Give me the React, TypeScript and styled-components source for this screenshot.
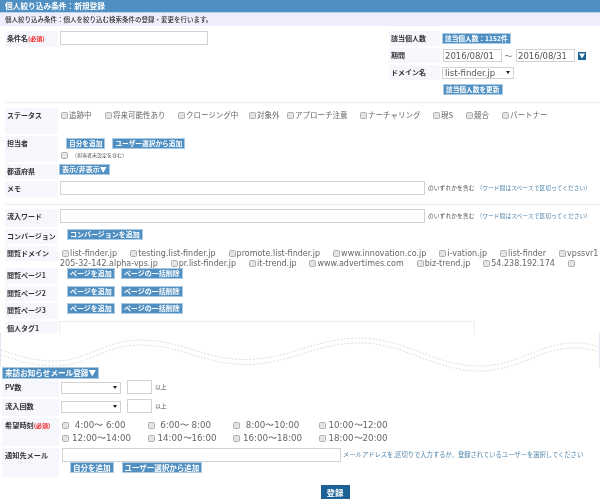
import styled, { createGlobalStyle } from "styled-components";

const GlobalStyle = createGlobalStyle`
    html, body {
        margin: 0;
        padding: 0;
        background: #fff;
    }
    body {
        font-family: "Noto Sans CJK JP", "Liberation Sans", sans-serif;
        font-size: 9px;
        color: #444;
    }
`;

const statuses = ["追跡中", "将来可能性あり", "クロージング中", "対象外", "アプローチ注意", "ナーチャリング", "現S", "競合", "パートナー"];
const domains1 = ["list-finder.jp", "testing.list-finder.jp", "promote.list-finder.jp", "www.innovation.co.jp", "i-vation.jp", "list-finder", "vpssvr1"];
const domains2 = ["pr.list-finder.jp", "it-trend.jp", "www.advertimes.com", "biz-trend.jp", "54.238.192.174"];
const hours = [" 4:00〜 6:00", " 6:00〜 8:00", " 8:00〜10:00", "10:00〜12:00", "12:00〜14:00", "14:00〜16:00", "16:00〜18:00", "18:00〜20:00"];
const pages = ["閲覧ページ1", "閲覧ページ2", "閲覧ページ3"];

const App = () => {
    return (
        <Page>
            <GlobalStyle />
            <Title>個人絞り込み条件：新規登録</Title>
            <SubTitle>個人絞り込み条件：個人を絞り込む検索条件の登録・変更を行います。</SubTitle>

            <TopSection>
                <Row $height={16}>
                    <Label>条件名<Required>(必須)</Required></Label>
                    <TextInput $width={148} />
                </Row>
                <SidePanel>
                    <SideRow>
                        <SideLabel>該当個人数</SideLabel>
                        <Button $size={6.7}>該当個人数：1152件</Button>
                    </SideRow>
                    <SideRow>
                        <SideLabel>期間</SideLabel>
                        <DateInput value="2016/08/01" readOnly />
                        <Tilde>〜</Tilde>
                        <DateInput value="2016/08/31" readOnly />
                        <CalendarButton>
                            <svg width="8" height="8" viewBox="0 0 8 8"><path d="M1 1.5h6L4 6.5z" fill="#fff" /></svg>
                        </CalendarButton>
                    </SideRow>
                    <SideRow>
                        <SideLabel>ドメイン名</SideLabel>
                        <Select $width={72}>list-finder.jp</Select>
                    </SideRow>
                    <SideRow>
                        <SideSpacer />
                        <Button $size={6.7}>該当個人数を更新</Button>
                    </SideRow>
                </SidePanel>
            </TopSection>

            <Divider />

            <Rows>
                <Row $height={26}>
                    <Label>ステータス</Label>
                    <StatusList>
                        {statuses.map(s => <CheckItem key={s}><Box />{s}</CheckItem>)}
                    </StatusList>
                </Row>
                <Row $height={26}>
                    <Label>担当者</Label>
                    <OwnerCell>
                        <ButtonRow $gap={7}>
                            <Button $size={6.7}>自分を追加</Button>
                            <Button $size={6.7}>ユーザー選択から追加</Button>
                        </ButtonRow>
                        <OwnerNote><Box />（担当者未設定を含む）</OwnerNote>
                    </OwnerCell>
                </Row>
                <Row $height={15}>
                    <Label>都道府県</Label>
                    <Button $size={7}>表示/非表示▼</Button>
                </Row>
                <Row $height={16}>
                    <Label>メモ</Label>
                    <TextInput $width={365} />
                    <Hint>のいずれかを含む</Hint>
                    <BlueHint>（ワード間はスペースで区切ってください）</BlueHint>
                </Row>
            </Rows>

            <Divider $top={7} $bottom={4} />

            <Rows>
                <Row $height={18}>
                    <Label>流入ワード</Label>
                    <TextInput $width={365} />
                    <Hint>のいずれかを含む</Hint>
                    <BlueHint>（ワード間はスペースで区切ってください）</BlueHint>
                </Row>
                <Row $height={15}>
                    <Label>コンバージョン</Label>
                    <Indented><Button $size={7}>コンバージョンを追加</Button></Indented>
                </Row>
                <DomainRow $height={15}>
                    <Label>閲覧ドメイン</Label>
                    <DomainCell>
                        <DomainLine>
                            {domains1.map(d => <DomainItem key={d}><Box />{d}</DomainItem>)}
                        </DomainLine>
                        <DomainLine>
                            <DomainItem>205-32-142.alpha-vps.jp</DomainItem>
                            {domains2.map(d => <DomainItem key={d}><Box />{d}</DomainItem>)}
                            <Box />
                        </DomainLine>
                    </DomainCell>
                </DomainRow>
                {pages.map(p => (
                    <Row $height={15.5} key={p}>
                        <Label>{p}</Label>
                        <Indented>
                            <ButtonRow $gap={6}>
                                <Button $size={7}>ページを追加</Button>
                                <Button $size={7}>ページの一括削除</Button>
                            </ButtonRow>
                        </Indented>
                    </Row>
                ))}
                <Row $height={12.5}>
                    <Label>個人タグ1</Label>
                    <TagBox />
                </Row>
            </Rows>

            <Wave viewBox="0 0 600 34" preserveAspectRatio="none">
                <path d="M0 17C20 24 35 28 55 28C85 28 105 7 140 7C180 7 205 26.5 245 26.5C290 26.5 315 5 360 5C405 5 435 33 480 33C520 33 540 10 575 10Q590 10 600 14" fill="none" stroke="#d0d0d0" strokeWidth="0.7" strokeDasharray="2 1.5" />
                <path d="M0 22C20 29 35 33 55 33C85 33 105 12 140 12C180 12 205 31.5 245 31.5C290 31.5 315 10 360 10C405 10 435 38 480 38C520 38 540 15 575 15Q590 15 600 19" fill="none" stroke="#d0d0d0" strokeWidth="0.7" strokeDasharray="2 1.5" />
            </Wave>

            <MailToggle $size={7.6}>来訪お知らせメール登録▼</MailToggle>

            <MailRows>
                <Row $height={17}>
                    <MailLabel>PV数</MailLabel>
                    <MailSelect $width={60} />
                    <SmallInput />
                    <Hint>以上</Hint>
                </Row>
                <Row $height={17}>
                    <MailLabel>流入回数</MailLabel>
                    <MailSelect $width={60} />
                    <SmallInput />
                    <Hint>以上</Hint>
                </Row>
                <Row $height={28}>
                    <MailLabel>希望時刻<Required>(必須)</Required></MailLabel>
                    <HourGrid>
                        {hours.map(h => <HourItem key={h}><Box />{h}</HourItem>)}
                    </HourGrid>
                </Row>
                <Row $height={29}>
                    <MailLabel>通知先メール</MailLabel>
                    <MailCell>
                        <MailLine>
                            <TextInput $width={279} />
                            <MailHint>メールアドレスを,区切りで入力するか、登録されているユーザーを選択してください</MailHint>
                        </MailLine>
                        <MailButtons $gap={8}>
                            <Button $size={7.5}>自分を追加</Button>
                            <Button $size={7.5}>ユーザー選択から追加</Button>
                        </MailButtons>
                    </MailCell>
                </Row>
            </MailRows>

            <SubmitRow>
                <SubmitButton>登録</SubmitButton>
            </SubmitRow>
        </Page>
    );
};

const Page = styled.div`
    width: 600px;
    height: 500px;
    overflow: hidden;
    background: #fff;
    filter: blur(0.3px);
`;

const Title = styled.div`
    height: 12px;
    line-height: 12px;
    padding-left: 5px;
    background: #4f8fc1;
    border-bottom: 1px solid #b9d3e8;
    color: #fff;
    font-size: 7.7px;
    font-weight: 700;
`;

const SubTitle = styled.div`
    height: 13px;
    line-height: 13px;
    padding-left: 5px;
    background: #eeeefc;
    font-size: 6.5px;
    font-weight: 500;
    color: #333;
`;

const TopSection = styled.div`
    height: 76px;
    display: flex;
    justify-content: space-between;
    padding: 5px 0 0 5px;
    box-sizing: border-box;
`;

const Rows = styled.div`
    display: flex;
    flex-direction: column;
    gap: 2px;
    padding-left: 5px;
`;

const MailRows = styled(Rows)`
    padding: 1px 0 0 2px;
`;

const Row = styled.div<{ $height: number }>`
    display: flex;
    align-items: flex-start;
    height: ${p => p.$height}px;
`;

const DomainRow = styled(Row)`
    margin-bottom: 5px;
`;

const Label = styled.div`
    flex: none;
    align-self: stretch;
    box-sizing: border-box;
    width: 53px;
    margin-right: 1px;
    padding: 2px 0 0 2px;
    background: #f6f6fd;
    font-size: 7px;
    font-weight: 700;
    line-height: 10px;
    color: #333;
    white-space: nowrap;
`;

const MailLabel = styled(Label)`
    width: 57px;
    padding-left: 3px;
    font-size: 7.2px;
    line-height: 11px;
`;

const Required = styled.span`
    color: #f02020;
    font-size: 6px;
`;

const TextInput = styled.div<{ $width: number }>`
    flex: none;
    box-sizing: border-box;
    width: ${p => p.$width}px;
    height: 14px;
    margin-left: 1px;
    background: #fff;
    border: 1px solid #d2d2d2;
`;

const SidePanel = styled.div`
    width: 211px;
    display: flex;
    flex-direction: column;
    gap: 2px;
`;

const SideRow = styled.div`
    display: flex;
    align-items: center;
    height: 15px;
`;

const SideLabel = styled.div`
    flex: none;
    box-sizing: border-box;
    width: 51px;
    height: 15px;
    margin-right: 2px;
    padding-left: 2px;
    background: #f6f6fd;
    font-size: 7px;
    font-weight: 700;
    line-height: 14px;
    color: #333;
`;

const SideSpacer = styled.div`
    flex: none;
    width: 54px;
`;

const Button = styled.div<{ $size: number }>`
    flex: none;
    box-sizing: border-box;
    width: fit-content;
    height: 11px;
    line-height: 9px;
    padding: 0 2px;
    background: #4f8fc1;
    border: 1px solid #a9cbe6;
    color: #fff;
    font-size: ${p => p.$size}px;
    font-weight: 700;
    white-space: nowrap;
`;

const DateInput = styled.input`
    box-sizing: border-box;
    width: 59px;
    height: 13px;
    margin-left: 1px;
    padding: 0 1px;
    border: 1px solid #d2d2d2;
    font-family: "DejaVu Sans", sans-serif;
    font-size: 8.5px;
    color: #555;
    outline: none;
`;

const Tilde = styled.span`
    width: 13px;
    text-align: center;
    color: #777;
    font-size: 8px;
`;

const CalendarButton = styled.div`
    width: 8px;
    height: 8px;
    margin-left: 3px;
    display: flex;
    background: #1c6296;
`;

const Select = styled.div<{ $width: number }>`
    flex: none;
    position: relative;
    box-sizing: border-box;
    width: ${p => p.$width}px;
    height: 12px;
    padding-left: 2px;
    border: 1px solid #d2d2d2;
    font-family: "DejaVu Sans", sans-serif;
    font-size: 8.5px;
    line-height: 10px;
    color: #555;

    &::after {
        content: "";
        position: absolute;
        right: 3px;
        top: 3px;
        border-left: 2px solid transparent;
        border-right: 2px solid transparent;
        border-top: 3px solid #222;
    }
`;

const MailSelect = styled(Select)`
    margin: 2px 0 0 1px;
`;

const Divider = styled.div<{ $top?: number; $bottom?: number }>`
    height: 1px;
    margin: ${p => p.$top ?? 0}px 0 ${p => p.$bottom ?? 5}px 5px;
    background: #eee;
`;

const StatusList = styled.div`
    display: grid;
    grid-template-columns: 44px 73px 71px 38px 73px 73px 33px 36px auto;
    padding: 1px 0 0 2px;
`;

const CheckItem = styled.label`
    display: flex;
    align-items: center;
    gap: 1px;
    font-size: 7.5px;
    line-height: 12px;
    color: #666;
    white-space: nowrap;
`;

const Box = styled.span`
    flex: none;
    display: inline-block;
    box-sizing: border-box;
    width: 7px;
    height: 7px;
    border: 1px solid #b0b0b0;
    border-radius: 1.5px;
    background: #e4e4e4;
`;

const OwnerCell = styled.div`
    display: flex;
    flex-direction: column;
    gap: 2px;
    padding: 2px 0 0 7px;
`;

const ButtonRow = styled.div<{ $gap: number }>`
    display: flex;
    gap: ${p => p.$gap}px;
`;

const OwnerNote = styled.div`
    display: flex;
    align-items: center;
    gap: 4px;
    margin-left: -5px;
    font-size: 5px;
    line-height: 8px;
    color: #555;
`;

const Hint = styled.span`
    margin-left: 3px;
    font-size: 5.8px;
    line-height: 14px;
    color: #555;
    white-space: nowrap;
`;

const BlueHint = styled(Hint)`
    color: #4f85ac;
    margin-left: 2px;
`;

const MailHint = styled(BlueHint)`
    font-size: 6.3px;
`;

const Indented = styled.div`
    padding-left: 8px;
`;

const DomainCell = styled.div`
    padding: 2px 0 0 3px;
`;

const DomainLine = styled.div`
    display: flex;
    align-items: center;
    gap: 13px;
    height: 10px;
    white-space: nowrap;

    &:last-child {
        margin-left: -2px;
    }
`;

const DomainItem = styled.span`
    display: flex;
    align-items: center;
    gap: 1px;
    font-family: "DejaVu Sans", sans-serif;
    font-size: 8px;
    color: #666;
`;

const TagBox = styled.div`
    flex: none;
    box-sizing: border-box;
    width: 416px;
    height: 13px;
    border: 1px solid #eee;
    border-bottom: 0;
`;

const Wave = styled.svg`
    display: block;
    box-sizing: border-box;
    width: 600px;
    height: 34px;
    border-left: 1px solid #e6e6f4;
    border-right: 1px solid #e6e6f4;
    overflow: visible;
`;

const MailToggle = styled(Button)`
    position: relative;
    height: 12px;
    line-height: 10px;
    margin-left: 2px;
`;

const SmallInput = styled.div`
    flex: none;
    box-sizing: border-box;
    width: 25px;
    height: 14px;
    margin-left: 6px;
    border: 1px solid #d2d2d2;
`;

const HourGrid = styled.div`
    display: grid;
    grid-template-columns: repeat(4, 85.5px);
    grid-auto-rows: 13px;
    padding: 1px 0 0 2px;
`;

const HourItem = styled.label`
    display: flex;
    align-items: center;
    gap: 3px;
    font-family: "DejaVu Sans", sans-serif;
    font-size: 8.7px;
    color: #666;
    white-space: pre;
`;

const MailCell = styled.div`
    display: flex;
    flex-direction: column;
    padding-left: 1px;
`;

const MailLine = styled.div`
    display: flex;
    align-items: center;
    height: 14px;
`;

const MailButtons = styled(ButtonRow)`
    padding-left: 9px;
`;

const SubmitRow = styled.div`
    display: flex;
    justify-content: center;
    padding: 8px 0 0 70px;
`;

const SubmitButton = styled.div`
    width: 29px;
    height: 14px;
    line-height: 14px;
    text-align: center;
    background: #1c6296;
    color: #fff;
    font-size: 8.5px;
    font-weight: 700;
`;

export default App;
